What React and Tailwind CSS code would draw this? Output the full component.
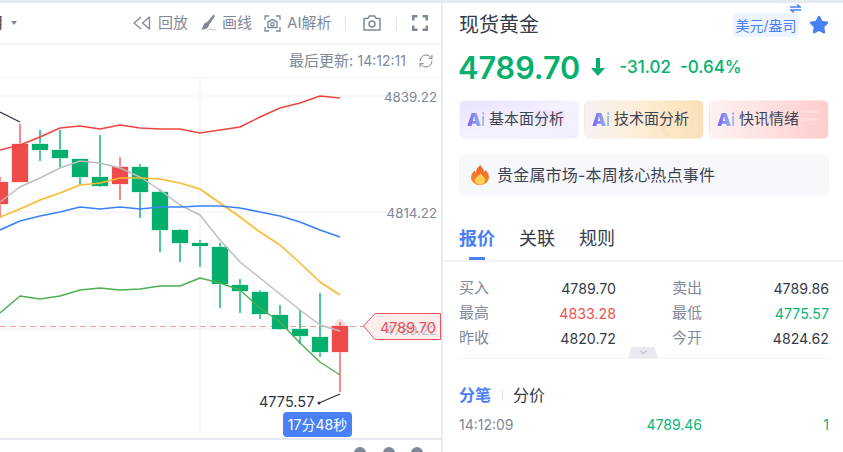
import { ChevronDown, RefreshCw, Star } from 'lucide-react';

// [x, bodyTop, bodyBottom, wickTop, wickBottom, isUp]
const candles = [
    [0, 182, 204, 177, 218, true],
    [20, 144, 182, 124, 144, true],
    [40, 144, 150, 130, 161, false],
    [60, 150, 158, 130, 167, false],
    [80, 159, 177, 159, 185, false],
    [100, 177, 186, 135, 187, false],
    [120, 167, 184, 157, 200, true],
    [140, 167, 192, 164, 218, false],
    [160, 192, 230, 189, 252, false],
    [180, 230, 243, 229, 262, false],
    [200, 243, 246, 240, 267, false],
    [220, 247, 284, 243, 308, false],
    [240, 285, 291, 279, 313, false],
    [260, 292, 314, 290, 319, false],
    [280, 315, 329, 305, 330, false],
    [300, 329, 336, 310, 344, false],
    [320, 337, 352, 293, 357, false],
    [340, 326, 352, 322, 392, true],
];

const lines = [
    { color: '#f0453f', width: 1.4, points: '0,150 20,145 40,137 60,128 80,126 100,129 120,125 140,128 160,129 180,129 200,133 220,130 240,127 260,117 280,108 300,103 320,96 340,98' },
    { color: '#bcbcbc', width: 1.4, points: '0,202 20,187 40,178 60,168 80,161 100,163 120,168 140,177 160,190 180,205 200,215 220,240 240,262 260,278 280,294 300,310 320,325 340,331' },
    { color: '#fdb92e', width: 1.6, points: '0,217 20,209 40,200 60,193 80,185 100,183 120,178 140,178 160,179 180,183 200,189 220,203 240,217 260,232 280,245 300,263 320,282 340,295' },
    { color: '#3b82f6', width: 1.7, points: '0,230 20,221 40,216 60,212 80,207 100,209 120,207 140,209 160,207 180,207 200,206 220,206 240,208 260,212 280,216 300,222 320,230 340,237' },
    { color: '#4caf50', width: 1.4, points: '0,313 20,296 40,299 60,296 80,290 100,288 120,290 140,289 160,286 180,286 200,278 220,283 240,290 260,308 280,322 300,343 320,362 340,375' },
];

const stats = [
    ['买入', '4789.70', 'text-[#343b4a]', '卖出', '4789.86', 'text-[#343b4a]'],
    ['最高', '4833.28', 'text-[#f0504f]', '最低', '4775.57', 'text-[#08b573]'],
    ['昨收', '4820.72', 'text-[#343b4a]', '今开', '4824.62', 'text-[#343b4a]'],
];

function CandleChart() {
    return (
        <svg className="absolute inset-0" width="441" height="360" viewBox="0 78 441 360">
            <g stroke="#f3f4f7" strokeWidth="1.5">
                <line x1="0" y1="96" x2="441" y2="96" />
                <line x1="0" y1="212" x2="441" y2="212" />
                <line x1="0" y1="329" x2="441" y2="329" />
                <line x1="200" y1="78" x2="200" y2="438" />
            </g>
            <line x1="0" y1="326.5" x2="364" y2="326.5" stroke="#f59a9a" strokeWidth="1" strokeDasharray="6 4" />
            {candles.map(([x, top, bottom, wickTop, wickBottom, up]) => (
                <g key={x}>
                    <rect x={x - 1} y={wickTop} width="2" height={wickBottom - wickTop} fill={up ? '#f58a8a' : '#4cc79b'} />
                    <rect x={x - 8.5} y={top - 0.5} width="17" height={bottom - top + 1} fill={up ? '#fbc9c9' : '#b5e8d3'} />
                    <rect x={x - 8} y={top} width="16" height={bottom - top} fill={up ? '#ef4b4b' : '#05b06f'} />
                </g>
            ))}
            {lines.map((l) => (
                <polyline key={l.color} points={l.points} fill="none" stroke={l.color} strokeWidth={l.width} strokeLinejoin="round" />
            ))}
            <circle cx="340" cy="324" r="5" fill="#ef4b4b" opacity="0.18" />
            <line x1="0" y1="112" x2="20" y2="122" stroke="#2b3040" strokeWidth="1.2" />
            <line x1="340" y1="394" x2="319" y2="403" stroke="#2b3040" strokeWidth="1.2" />
            <circle cx="319" cy="403" r="1.5" fill="#2b3040" />
            <path d="M363.5 326 L375 313.5 H440.5 V339.5 H375 Z" fill="#fbeeee" stroke="#f0545a" strokeWidth="1" />
        </svg>
    );
}

function Toolbar() {
    return (
        <div className="h-[42px] border-b-2 border-[#f3f4f7] flex items-center text-[15px] text-[#7f8899] shrink-0">
            <span className="w-[4px] overflow-hidden flex justify-end text-[#343b4a] shrink-0"><span className="shrink-0">月</span></span>
            <svg className="ml-[7px] shrink-0" width="6" height="4" viewBox="0 0 6 4"><path d="M0 0H6L3 4Z" fill="#7f8899" /></svg>
            <svg className="ml-[116px] shrink-0" width="18" height="14" viewBox="0 0 18 14" fill="none" stroke="#7f8899" strokeWidth="1.3" strokeLinejoin="round">
                <path d="M8 1 L1 7 L8 13" />
                <path d="M16.5 1 L9.5 7 L16.5 13 Z" />
            </svg>
            <span className="ml-[7px]">回放</span>
            <svg className="ml-[11px] shrink-0" width="18" height="18" viewBox="0 0 18 18" fill="#7f8899">
                <path d="M14.5 0.5 L16 2 L10 11 C9.5 14 7 15.5 2 15.5 C4 14 4 11 5.5 9.5 C6.5 8.5 7.5 8.3 8 8.3 Z" />
                <path d="M8 16.5 C10 15 12 14.5 12.5 15.5 C13 16.5 15 16 16.5 15.5" fill="none" stroke="#b4bac6" strokeWidth="1" />
            </svg>
            <span className="ml-[5px]">画线</span>
            <svg className="ml-[12px] shrink-0" width="17" height="17" viewBox="0 0 17 17" fill="none" stroke="#7f8899" strokeWidth="1.3">
                <path d="M5 1H1V5M12 1H16V5M1 12V16H5M16 12V16H12" />
                <path d="M4 6.5H6L7 5H10L11 6.5H13V12.5H4Z" />
                <circle cx="8.5" cy="9.3" r="1.7" />
            </svg>
            <span className="ml-[6px]">AI解析</span>
            <span className="ml-[14px] w-px h-[15px] bg-[#e3e5ea] shrink-0" />
            <svg className="ml-[17px] shrink-0" width="18" height="16" viewBox="0 0 18 16" fill="none" stroke="#7f8899" strokeWidth="1.5">
                <path d="M1 3.5H5L6.2 1H11.8L13 3.5H17V15H1Z" strokeLinejoin="round" />
                <circle cx="9" cy="9" r="3" />
            </svg>
            <span className="ml-[15px] w-px h-[15px] bg-[#e3e5ea] shrink-0" />
            <svg className="ml-[15px] shrink-0" width="16" height="16" viewBox="0 0 16 16" fill="none" stroke="#7f8899" strokeWidth="2.4">
                <path d="M1.2 5.5V1.2H5.5M10.5 1.2H14.8V5.5M1.2 10.5V14.8H5.5M14.8 10.5V14.8H10.5" />
            </svg>
        </div>
    );
}

function AiButton({ label, bg, children }) {
    return (
        <div className={`relative w-[120px] h-[39px] rounded-md border border-white/40 overflow-hidden flex items-center pl-[7px] ${bg}`}>
            {children}
            <span className="w-[17px] text-[18px] leading-none font-black bg-gradient-to-r from-[#7b5ff6] to-[#9cc0ea] bg-clip-text text-transparent">Ai</span>
            <span className="relative ml-[5px] text-[15px] text-[#3c4352]">{label}</span>
        </div>
    );
}

export default function App() {
    return (
        <div className="w-[843px] h-[452px] overflow-hidden bg-[#e6e9f2] pt-[3px] flex font-['Inter','Noto_Sans_CJK_SC',sans-serif]">
            <div className="w-[441px] h-full bg-white flex flex-col shrink-0">
                <Toolbar />
                <div className="h-[32px] flex items-center justify-end gap-[12px] pr-[7px] text-[#7f8899] shrink-0">
                    <span className="text-[15px]">最后更新: <span className="text-[14px]">14:12:11</span></span>
                    <RefreshCw size={16} strokeWidth={1.5} />
                </div>
                <div className="relative h-[361px] border-t border-[#f3f4f7] shrink-0">
                    <CandleChart />
                    <span className="absolute right-[4px] top-[9px] text-[13.3px] leading-5 text-[#7f8899]">4839.22</span>
                    <span className="absolute right-[4px] top-[125px] text-[13.3px] leading-5 text-[#7f8899]">4814.22</span>
                    <span className="absolute right-[4px] top-[242px] text-[13.3px] leading-5 text-[#b9bdc6]">4789.22</span>
                    <span className="absolute right-[5px] top-[240px] text-[14.5px] leading-5 text-[#ef5056]">4789.70</span>
                    <span className="absolute left-[259px] top-[314px] text-[14.5px] leading-5 text-[#2f3542]">4775.57</span>
                    <div className="absolute left-[283px] top-[334px] w-[69px] h-[25px] rounded-sm bg-[#4a80f5] text-white text-[14px] flex items-center justify-center">17分48秒</div>
                </div>
                <div className="h-[2px] bg-[#e6e9f2] shrink-0" />
                <div className="flex gap-[16.5px] pl-[354px] pt-[7px]">
                    <span className="w-[12px] h-[12px] rounded-full bg-[#7f8899]" />
                    <span className="w-[12px] h-[12px] rounded-full bg-[#7f8899]" />
                    <span className="w-[12px] h-[12px] rounded-full bg-[#7f8899]" />
                </div>
            </div>
            <div className="w-px ml-px bg-[#eceef3] shrink-0" />
            <div className="flex-1 bg-white pl-[16px] pr-[14px] flex flex-col">
                <div className="flex items-center h-[44px] shrink-0">
                    <span className="text-[20px] text-[#343b4a]">现货黄金</span>
                    <div className="relative ml-auto w-[66px] h-[24px] rounded-sm bg-[#eef4ff] text-[#4a80f5] text-[14px] flex items-center justify-center whitespace-nowrap">
                        美元/盎司
                        <svg className="absolute right-[-2px] top-[-9px]" width="11" height="9" viewBox="0 0 11 9" fill="none" stroke="#4a80f5" strokeWidth="1.5">
                            <path d="M0 3H10L7 0.5M11 6H1L4 8.5" />
                        </svg>
                    </div>
                    <Star className="ml-[10px]" size={20} fill="#4a80f5" stroke="#4a80f5" />
                </div>
                <div className="flex items-center h-[42px] shrink-0 text-[#05b06f]">
                    <span className="text-[30.6px] -ml-[1px] leading-none font-semibold">4789.70</span>
                    <svg className="ml-[11px] mb-[3px] shrink-0" width="14" height="18" viewBox="0 0 14 18" fill="currentColor">
                        <path d="M5 0H9V10H14L7 18L0 10H5Z" />
                    </svg>
                    <span className="ml-[14px] text-[17px] font-medium">-31.02</span>
                    <span className="ml-[9px] text-[17px] font-medium">-0.64%</span>
                </div>
                <div className="flex gap-[5px] mt-[11px] shrink-0">
                    <AiButton label="基本面分析" bg="bg-gradient-to-br from-[#e8e2fe] via-[#f6f1fe] to-[#eef0fe]">
                        <span className="absolute right-[13px] top-[9px] w-[30px] h-[13px] bg-[#f1e3fb]" />
                    </AiButton>
                    <AiButton label="技术面分析" bg="bg-gradient-to-r from-[#f6f1f3] via-[#fdedd3] to-[#fadfb6]">
                        <span className="absolute right-[4px] top-[6px] w-[38px] h-[38px] rounded-full border-[5px] border-[#f9e3c0]" />
                    </AiButton>
                    <AiButton label="快讯情绪" bg="bg-gradient-to-r from-[#fef1f1] via-[#ffe0e0] to-[#ffcccb]">
                        <span className="absolute right-[8px] top-[9px] w-[20px] h-[3px] bg-[#ffdcdc]" />
                        <span className="absolute right-[8px] top-[17px] w-[20px] h-[3px] bg-[#ffdcdc]" />
                    </AiButton>
                </div>
                <div className="h-[42px] mt-[15px] rounded-md bg-[#f7f8fc] flex items-center pl-[12px] shrink-0">
                    <svg width="18" height="20" viewBox="0 0 18 20">
                        <defs>
                            <linearGradient id="flame" x1="0" y1="0" x2="0" y2="1">
                                <stop offset="0" stopColor="#f0602a" />
                                <stop offset="1" stopColor="#f98f2c" />
                            </linearGradient>
                        </defs>
                        <path d="M9.5 0 C10.5 3 13 4 13.5 7 C14 6.4 14.3 5.6 14.2 4.8 C16.6 7 18 9.6 18 12 C18 16.8 14 20 9 20 C4 20 0 16.8 0 12.2 C0 9 2 7.4 3.4 5.4 C3.8 6.6 4.2 7.2 5 7.6 C5 4.4 7 2 9.5 0 Z" fill="url(#flame)" />
                        <path d="M9.5 8.5 C10.5 10.5 14 12 14 15 C14 17.8 11.8 19.5 9 19.5 C6.2 19.5 4 17.8 4 15 C4 12.4 8 11 9.5 8.5 Z" fill="#fcd25a" />
                    </svg>
                    <span className="ml-[8px] text-[16px] tracking-[0.2px] text-[#3c4352] whitespace-nowrap">贵金属市场-本周核心热点事件</span>
                </div>
                <div className="relative h-[66px] -ml-[16px] -mr-[14px] pl-[16px] pt-[20px] border-b-2 border-[#f3f4f7] flex items-center gap-[24px] text-[18px] text-[#343b4a] shrink-0">
                    <span className="font-bold text-[#4a80f5]">报价</span>
                    <span>关联</span>
                    <span>规则</span>
                    <span className="absolute left-[26px] bottom-[0px] w-[16px] h-[3px] bg-[#4a80f5]" />
                </div>
                <div className="relative mt-[14px] pb-[7px] border-b border-[#f0f1f5] shrink-0">
                    {stats.map(([l1, v1, c1, l2, v2, c2]) => (
                        <div key={l1} className="flex items-center h-[25px]">
                            <span className="w-[30px] text-[15px] text-[#7f8899]">{l1}</span>
                            <span className={`w-[127px] text-[14.2px] text-right ${c1}`}>{v1}</span>
                            <span className="ml-[56px] w-[30px] text-[15px] text-[#7f8899]">{l2}</span>
                            <span className={`w-[127px] text-[14.2px] text-right ${c2}`}>{v2}</span>
                        </div>
                    ))}
                    <div className="absolute left-[169px] bottom-0 w-[30px] h-[11px] bg-[#e8eaf0] [clip-path:polygon(12%_0,88%_0,100%_100%,0_100%)] flex items-center justify-center">
                        <ChevronDown size={11} stroke="#9aa1ae" />
                    </div>
                </div>
                <div className="flex items-center h-[24px] mt-[24px] text-[16px] shrink-0">
                    <span className="font-bold text-[#4a80f5]">分笔</span>
                    <span className="ml-[11px] w-px h-[10px] bg-[#d9dce3]" />
                    <span className="ml-[10px] text-[#343b4a]">分价</span>
                </div>
                <div className="flex items-center h-[24px] mt-[5px] text-[14px] text-[#08b573] shrink-0">
                    <span className="w-[55px] text-[#7f8899]">14:12:09</span>
                    <span className="w-[188px] text-right">4789.46</span>
                    <span className="flex-1 text-right">1</span>
                </div>
            </div>
        </div>
    );
}
